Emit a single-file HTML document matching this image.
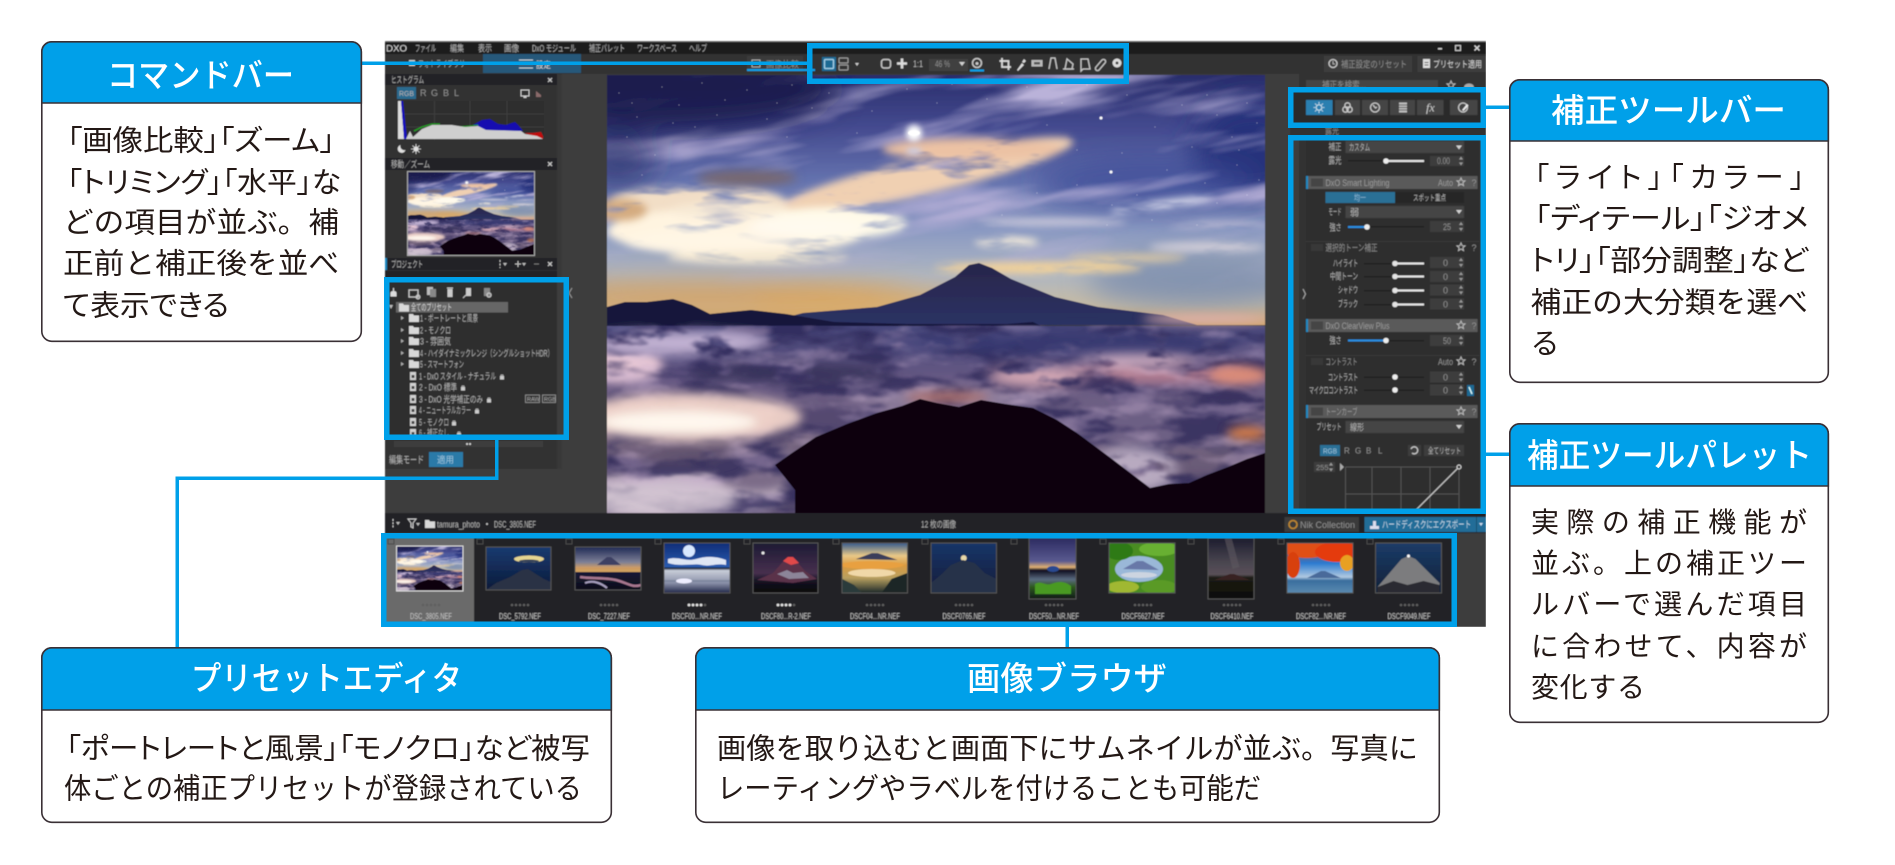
<!DOCTYPE html>
<html lang="ja"><head><meta charset="utf-8"><title>DxO PhotoLab 画面説明</title>
<style>
html,body{margin:0;padding:0;background:#fff;width:1895px;height:865px;overflow:hidden}
svg{display:block;font-family:"Liberation Sans","Noto Sans CJK JP",sans-serif}
.b{font-size:29px;fill:#231815;font-feature-settings:"palt"}
.f{font-size:28px;fill:#231815}
.g{font-size:29px;fill:#231815}
.h{font-size:33px;fill:#fff;font-weight:500}
.s{font-size:9px;fill:#b4b4b4}
.w{font-size:9px;fill:#d8d8d8}
.d{font-size:9px;fill:#8f8f8f}
.n{font-size:8px;fill:#c4c4c4;text-anchor:middle}
.i{fill:none;stroke:#c8c8c8;stroke-width:1.3}
</style></head><body>
<svg width="1895" height="865" viewBox="0 0 1895 865" xmlns="http://www.w3.org/2000/svg">
<defs>
<filter id="soft" x="0" y="0" width="100%" height="100%"><feGaussianBlur stdDeviation=".45"/></filter>
<filter id="bl" filterUnits="userSpaceOnUse" x="-60" y="-60" width="780" height="560"><feGaussianBlur stdDeviation="14"/></filter>
<filter id="bs" filterUnits="userSpaceOnUse" x="-60" y="-60" width="780" height="560"><feGaussianBlur stdDeviation="5"/></filter>
<filter id="gl" x="-100%" y="-100%" width="300%" height="300%"><feGaussianBlur stdDeviation="3"/></filter>
<filter id="wisp" filterUnits="userSpaceOnUse" x="-120" y="-140" width="900" height="480" color-interpolation-filters="sRGB"><feTurbulence type="fractalNoise" baseFrequency=".005 .032" numOctaves="4" seed="12"/><feColorMatrix values="0 0 0 0 .73 0 0 0 0 .70 0 0 0 0 .85 3 0 0 0 -1.42"/><feGaussianBlur stdDeviation="1"/></filter>
<filter id="tex" filterUnits="userSpaceOnUse" x="-40" y="-40" width="740" height="520" color-interpolation-filters="sRGB"><feGaussianBlur in="SourceGraphic" stdDeviation="4" result="a"/><feTurbulence type="fractalNoise" baseFrequency=".012 .05" numOctaves="4" seed="7"/><feColorMatrix values="0 0 0 0 0 0 0 0 0 0 0 0 0 0 0 4 0 0 0 -.9" result="n"/><feComposite in="a" in2="n" operator="in"/><feGaussianBlur stdDeviation=".6"/></filter>
<filter id="nd" filterUnits="userSpaceOnUse" x="0" y="250" width="658" height="188" color-interpolation-filters="sRGB"><feTurbulence type="fractalNoise" baseFrequency=".014 .05" numOctaves="5" seed="5"/><feColorMatrix values="0 0 0 0 .17 0 0 0 0 .15 0 0 0 0 .34 5 0 0 0 -2.1"/><feGaussianBlur stdDeviation="1.2"/></filter>
<filter id="nl" filterUnits="userSpaceOnUse" x="0" y="250" width="658" height="188" color-interpolation-filters="sRGB"><feTurbulence type="fractalNoise" baseFrequency=".018 .055" numOctaves="5" seed="17"/><feColorMatrix values="0 0 0 0 .80 0 0 0 0 .70 0 0 0 0 .82 5 0 0 0 -2.5"/><feGaussianBlur stdDeviation="1.2"/></filter>
<filter id="sea2" filterUnits="userSpaceOnUse" x="-40" y="200" width="740" height="280" color-interpolation-filters="sRGB"><feGaussianBlur in="SourceGraphic" stdDeviation="6" result="a"/><feTurbulence type="fractalNoise" baseFrequency=".024 .06" numOctaves="4" seed="33"/><feColorMatrix values="0 0 0 0 0 0 0 0 0 0 0 0 0 0 0 5 0 0 0 -1.5" result="n"/><feComposite in="a" in2="n" operator="in"/><feGaussianBlur stdDeviation="1"/></filter>
<linearGradient id="fade" x1="0" y1="0" x2="0" y2="1"><stop offset="0" stop-color="#fff"/><stop offset=".55" stop-color="#fff"/><stop offset="1" stop-color="#000"/></linearGradient>
<mask id="skym" maskUnits="userSpaceOnUse" x="0" y="0" width="658" height="438"><rect width="658" height="220" fill="url(#fade)"/></mask>
<linearGradient id="sky" x1="0" y1="0" x2="0" y2="1"><stop offset="0" stop-color="#2a2e6c"/><stop offset=".2" stop-color="#43498e"/><stop offset=".42" stop-color="#6472ae"/><stop offset=".62" stop-color="#8a99c2"/><stop offset=".8" stop-color="#aeb6c2"/><stop offset=".92" stop-color="#c8bca4"/><stop offset="1" stop-color="#d4a564"/></linearGradient>
<linearGradient id="cld" x1="0" y1="0" x2="0" y2="1"><stop offset="0" stop-color="#46467a"/><stop offset=".3" stop-color="#685a84"/><stop offset=".6" stop-color="#76667f"/><stop offset="1" stop-color="#54486a"/></linearGradient>
<linearGradient id="fj" x1="0" y1="0" x2="0" y2="1"><stop offset="0" stop-color="#28264a"/><stop offset="1" stop-color="#2c3264"/></linearGradient>
<linearGradient id="t2" x1="0" y1="0" x2="0" y2="1"><stop offset="0" stop-color="#163a70"/><stop offset="1" stop-color="#0e1b3a"/></linearGradient>
<linearGradient id="t3" x1="0" y1="0" x2="0" y2="1"><stop offset="0" stop-color="#1f2a55"/><stop offset=".35" stop-color="#7c7f96"/><stop offset=".5" stop-color="#d8a060"/><stop offset=".55" stop-color="#191a38"/><stop offset="1" stop-color="#0d0d1a"/></linearGradient>
<linearGradient id="t4" x1="0" y1="0" x2="0" y2="1"><stop offset="0" stop-color="#0f2d78"/><stop offset=".48" stop-color="#2a5cb0"/><stop offset=".5" stop-color="#101830"/><stop offset=".55" stop-color="#c8cdd8"/><stop offset=".8" stop-color="#8a90a8"/><stop offset="1" stop-color="#22284a"/></linearGradient>
<linearGradient id="t5" x1="0" y1="0" x2="0" y2="1"><stop offset="0" stop-color="#1d1a34"/><stop offset=".6" stop-color="#47304e"/><stop offset=".75" stop-color="#161424"/><stop offset="1" stop-color="#050508"/></linearGradient>
<linearGradient id="t6" x1="0" y1="0" x2="0" y2="1"><stop offset="0" stop-color="#3a5c8c"/><stop offset=".25" stop-color="#e8c888"/><stop offset=".45" stop-color="#d99a40"/><stop offset=".7" stop-color="#b8a060"/><stop offset="1" stop-color="#1e2a2a"/></linearGradient>
<linearGradient id="t7" x1="0" y1="0" x2="0" y2="1"><stop offset="0" stop-color="#1a3568"/><stop offset="1" stop-color="#0f1c3a"/></linearGradient>
<linearGradient id="t8" x1="0" y1="0" x2="0" y2="1"><stop offset="0" stop-color="#2c2a60"/><stop offset=".38" stop-color="#5a5a90"/><stop offset=".48" stop-color="#e0b070"/><stop offset=".53" stop-color="#101020"/><stop offset=".68" stop-color="#5a6a80"/><stop offset=".8" stop-color="#2e5a20"/><stop offset="1" stop-color="#101a18"/></linearGradient>
<linearGradient id="t10" x1="0" y1="0" x2="0" y2="1"><stop offset="0" stop-color="#1c1c2e"/><stop offset=".4" stop-color="#4a4650"/><stop offset=".6" stop-color="#5a5058"/><stop offset=".65" stop-color="#1c1c14"/><stop offset="1" stop-color="#0c0c08"/></linearGradient>
<linearGradient id="t11" x1="0" y1="0" x2="0" y2="1"><stop offset="0" stop-color="#d04418"/><stop offset=".4" stop-color="#2a7ad0"/><stop offset=".68" stop-color="#b0c8e0"/><stop offset=".75" stop-color="#3a6e9e"/><stop offset="1" stop-color="#5a8ab0"/></linearGradient>
<linearGradient id="t12" x1="0" y1="0" x2="0" y2="1"><stop offset="0" stop-color="#1c3c68"/><stop offset="1" stop-color="#0f2038"/></linearGradient>
<symbol id="fuji" viewBox="0 0 658 438" preserveAspectRatio="none">
<rect width="658" height="250" fill="url(#sky)"/>
<g filter="url(#bl)">
<ellipse cx="645" cy="75" rx="60" ry="50" fill="#28327a"/>
<ellipse cx="100" cy="222" rx="210" ry="16" fill="#d89a50" opacity=".75"/>
<ellipse cx="250" cy="228" rx="110" ry="9" fill="#e8a040" opacity=".85"/>
<ellipse cx="590" cy="205" rx="110" ry="28" fill="#8090ae" opacity=".9"/>
<ellipse cx="540" cy="108" rx="110" ry="26" fill="#3c4a96" opacity=".7"/>
</g>
<g mask="url(#skym)"><g transform="rotate(-11 330 110)"><rect x="-120" y="-140" width="900" height="480" filter="url(#wisp)"/></g></g>
<g filter="url(#bl)">
<ellipse cx="50" cy="14" rx="180" ry="42" fill="#151948" opacity=".85"/>
<ellipse cx="10" cy="85" rx="40" ry="30" fill="#262c68" opacity=".6"/>
</g>
<g filter="url(#tex)">
<ellipse cx="320" cy="100" rx="150" ry="18" fill="#f0d0b2" transform="rotate(-13 320 100)"/>
<ellipse cx="365" cy="74" rx="90" ry="11" fill="#ecc2a4"/>
<ellipse cx="90" cy="128" rx="90" ry="18" fill="#f2dec6"/>
<ellipse cx="130" cy="156" rx="130" ry="24" fill="#fff4e0"/>
<ellipse cx="225" cy="148" rx="75" ry="16" fill="#fffae8"/>
<ellipse cx="14" cy="135" rx="26" ry="11" fill="#d4ab80"/>
<ellipse cx="150" cy="182" rx="90" ry="7" fill="#f4e8d2"/>
<ellipse cx="400" cy="167" rx="32" ry="5" fill="#f8eedc"/>
<ellipse cx="445" cy="147" rx="75" ry="3.500" fill="#d4d0de"/>
<ellipse cx="555" cy="130" rx="52" ry="4.500" fill="#e0e0ee" transform="rotate(-8 555 130)"/>
<ellipse cx="600" cy="172" rx="58" ry="5" fill="#d2ced8"/>
<ellipse cx="610" cy="150" rx="52" ry="4" fill="#b4b4d0"/>
<ellipse cx="430" cy="193" rx="105" ry="6" fill="#f2d29a"/>
<ellipse cx="520" cy="183" rx="60" ry="4" fill="#dcc8a4"/>
</g>
<g filter="url(#bs)">
<ellipse cx="140" cy="103" rx="50" ry="7" fill="#7c6664" opacity=".9"/>
<ellipse cx="105" cy="165" rx="85" ry="10" fill="#fff6e6" opacity=".9"/>
<ellipse cx="200" cy="152" rx="60" ry="8" fill="#fffaf0" opacity=".95"/>
<ellipse cx="120" cy="135" rx="55" ry="8" fill="#f6e8d4" opacity=".8"/>
</g>
<path d="M12 18h0M30 42h0M55 12h0M72 30h0M95 8h0M118 25h0M140 15h0M160 44h0M20 62h0M48 80h0M88 52h0M185 10h0M205 33h0M232 6h0M265 36h0M300 14h0M345 9h0M380 24h0M420 12h0M455 28h0M480 10h0M520 20h0M548 52h0M585 72h0M610 40h0M640 28h0M630 90h0M598 108h0M560 95h0M530 120h0M470 110h0M640 120h0M590 150h0M500 150h0M430 118h0M395 140h0M250 58h0M180 62h0M35 100h0M625 62h0M650 48h0M470 75h0M515 78h0M25 28h0M66 48h0M110 40h0M170 28h0M222 18h0M330 28h0M440 50h0M575 30h0M600 20h0M632 75h0M505 130h0M545 145h0M610 128h0M652 105h0" stroke="#fff" stroke-width=".9" stroke-linecap="round" opacity=".6"/>
<circle cx="307" cy="58" r="8" fill="#fff" filter="url(#gl)"/><ellipse cx="307" cy="58" rx="6" ry="3" fill="#fff"/>
<ellipse cx="307" cy="76" rx="8" ry="3" fill="#c8cce8" filter="url(#gl)"/>
<circle cx="494" cy="43" r="1.500" fill="#fff"/><circle cx="504" cy="97" r="1.500" fill="#fff"/>
<polygon points="372,188 385,193 404,204 448,222 491,232 556,240 590,250 150,250 196,238 270,232 313,220 348,202 362,190" fill="url(#fj)"/>
<polygon points="0,232 18,227 40,227 66,224 85,230 103,239 144,235 179,239 227,247 300,249 400,249 426,247 440,254 0,258" fill="#15173a"/>
<rect y="251" width="658" height="187" fill="url(#cld)"/>
<g filter="url(#bs)">
<ellipse cx="14" cy="290" rx="42" ry="18" fill="#e6c6d4"/>
<ellipse cx="560" cy="298" rx="100" ry="11" fill="#bc8090" opacity=".85"/>
<ellipse cx="350" cy="322" rx="110" ry="14" fill="#9c8aa6" opacity=".7"/>
<ellipse cx="540" cy="350" rx="120" ry="24" fill="#6a5e86" opacity=".8"/>
<ellipse cx="70" cy="420" rx="110" ry="24" fill="#c4b4c6"/>
<ellipse cx="150" cy="392" rx="45" ry="26" fill="#7c6c88"/>
</g>
<rect y="250" width="658" height="188" filter="url(#nd)" opacity=".75"/>
<rect y="250" width="658" height="188" filter="url(#nl)" opacity=".38"/>
<g filter="url(#sea2)">
<ellipse cx="460" cy="268" rx="190" ry="11" fill="#363870"/>
<ellipse cx="185" cy="298" rx="105" ry="11" fill="#39345c"/>
<ellipse cx="225" cy="345" rx="55" ry="16" fill="#544870"/>
<ellipse cx="70" cy="378" rx="55" ry="9" fill="#63546f"/>
<ellipse cx="70" cy="268" rx="90" ry="12" fill="#c4b4d4"/>
<ellipse cx="430" cy="302" rx="50" ry="11" fill="#d4a8b4"/>
<ellipse cx="530" cy="286" rx="60" ry="7" fill="#dcb8c8"/>
<ellipse cx="525" cy="395" rx="45" ry="24" fill="#b8aac0"/>
</g>
<g filter="url(#bs)">
<ellipse cx="632" cy="300" rx="30" ry="9" fill="#dc8c78"/>
<ellipse cx="600" cy="244" rx="65" ry="5" fill="#e0b0ac"/>
<ellipse cx="80" cy="342" rx="115" ry="24" fill="#f6d8cc" opacity=".92"/>
<ellipse cx="72" cy="347" rx="78" ry="11" fill="#fff8ee"/>
<ellipse cx="640" cy="358" rx="20" ry="6" fill="#d87a40"/>
<ellipse cx="340" cy="322" rx="42" ry="5" fill="#b07068"/>
<ellipse cx="55" cy="425" rx="75" ry="16" fill="#d4c6d2" opacity=".85"/>
</g>
<polygon points="168,390 185,378 209,362 240,349 270,338 295,331 313,324 330,328 352,332 374,325 398,329 426,333 450,345 470,358 505,384 543,413 562,409 582,408 600,400 621,392 640,384 658,378 658,438 188,438 188,415" fill="#070510"/>
</symbol>
<g id="sp"><polygon points="0,3 2,0 4,3" fill="#999"/><polygon points="0,6 2,9 4,6" fill="#999"/></g>
<polygon id="st" points="0,-4 1.2,-1.3 4,-1.2 1.9,.7 2.5,3.6 0,2 -2.5,3.6 -1.9,.7 -4,-1.2 -1.2,-1.3" fill="none" stroke="#b8b8b8" stroke-width="1"/>
<polygon id="ar" points="0,0 6,0 3,4" fill="#d0d0d0"/>
<g id="fo"><path d="M0 1h4l1 1.500h5v6.500h-10z" fill="#d8d8d8"/></g>
<g id="fi"><rect width="6" height="8" fill="#d0d0d0"/><rect x="1.500" y="3" width="3" height="3" fill="#444"/></g>
<g id="lk"><rect x="0" y="2" width="4" height="3.500" fill="#ccc"/><path d="M1 2v-1h2v1" fill="none" stroke="#ccc" stroke-width=".7"/></g>
<g id="stars"><path d="M-8 0h.01M-4 0h.01M0 0h.01M4 0h.01M8 0h.01" stroke="#5e5e5e" stroke-width="2.600" stroke-linecap="round"/></g>
<g id="star4"><path d="M-8 0h.01M-4 0h.01M0 0h.01M4 0h.01" stroke="#e8e8e8" stroke-width="2.800" stroke-linecap="round"/><path d="M8 0h.01" stroke="#5e5e5e" stroke-width="2.600" stroke-linecap="round"/></g>
</defs>

<rect width="1895" height="865" fill="#fff"/>
<g filter="url(#soft)">
<rect x="385" y="41" width="1101" height="586" fill="#3a3a3a"/>
<rect x="385" y="41" width="1101" height="1" fill="#777"/>
<rect x="385" y="42" width="1101" height="12" fill="#1b1b1d"/>
<rect x="385" y="54" width="1101" height="20" fill="#333"/>
<text x="386" y="51.500" class="w" textLength="21" lengthAdjust="spacingAndGlyphs">DXO</text>
<text x="415" y="51.500" class="s" textLength="21" lengthAdjust="spacingAndGlyphs">ファイル</text>
<text x="450" y="51.500" class="s" textLength="14" lengthAdjust="spacingAndGlyphs">編集</text>
<text x="478" y="51.500" class="s" textLength="14" lengthAdjust="spacingAndGlyphs">表示</text>
<text x="504" y="51.500" class="s" textLength="15" lengthAdjust="spacingAndGlyphs">画像</text>
<text x="532" y="51.500" class="s" textLength="44" lengthAdjust="spacingAndGlyphs">DxO モジュール</text>
<text x="589" y="51.500" class="s" textLength="36" lengthAdjust="spacingAndGlyphs">補正パレット</text>
<text x="637" y="51.500" class="s" textLength="40" lengthAdjust="spacingAndGlyphs">ワークスペース</text>
<text x="689" y="51.500" class="s" textLength="18" lengthAdjust="spacingAndGlyphs">ヘルプ</text>
<rect x="1438" y="48" width="4" height="1.500" fill="#ccc"/>
<rect x="1455.500" y="45.500" width="5" height="5" fill="none" stroke="#ccc"/>
<path d="M1474.500 45.500l5 5M1479.500 45.500l-5 5" stroke="#ddd" stroke-width="1.300"/>

<rect x="483" y="54" width="98" height="19" fill="#25597a"/>
<rect x="409" y="60" width="6" height="6" fill="#c8c8c8"/>
<text x="418" y="67" class="s" textLength="47" lengthAdjust="spacingAndGlyphs">フォトライブラリ</text>
<path d="M519 60h14M519 64h14M519 68h14" stroke="#c8d4dc"/>
<text x="536" y="68" class="w" textLength="15" lengthAdjust="spacingAndGlyphs">設定</text>
<rect x="747" y="56" width="56" height="16" fill="#3a3a3a"/>
<rect x="752" y="60" width="8" height="7" fill="none" stroke="#aaa"/>
<text x="766" y="67.500" class="d" textLength="33" lengthAdjust="spacingAndGlyphs">画像比較</text>
<rect x="747" y="69" width="68" height="2" fill="#00a0e9"/>

<!-- left panel -->
<rect x="385" y="74" width="172" height="395" fill="#333"/>
<rect x="557" y="74" width="50" height="439" fill="#3d3d3d"/>
<rect x="557" y="74" width="5" height="395" fill="#383838"/>
<rect x="385" y="74" width="172" height="11" fill="#242426"/>
<text x="391" y="83" class="s" textLength="33" lengthAdjust="spacingAndGlyphs">ヒストグラム</text>
<path d="M548 78l4 4M552 78l-4 4" stroke="#ccc" stroke-width="1.200"/>
<rect x="397" y="87" width="19" height="12" fill="#2b6a8f"/>
<text x="399" y="96" class="s" style="font-size:7.500px" textLength="15" lengthAdjust="spacingAndGlyphs">RGB</text>
<text x="420" y="96" class="d">R</text><text x="431" y="96" class="d">G</text><text x="443" y="96" class="d">B</text><text x="454" y="96" class="d">L</text>
<rect x="521" y="90" width="8" height="6" fill="none" stroke="#ccc"/><rect x="523.500" y="96" width="3" height="2" fill="#ccc"/>
<path d="M536 91l5 4v2h-5z" fill="#8a6a6a"/>
<rect x="398" y="101" width="146" height="39" fill="#2e2e2e"/>
<path d="M434.500 101v39M470 101v39M507 101v39M398 114h146M398 127h146" stroke="#3e3e3e"/>
<polygon points="398,101 401,101 404,139 398,139" fill="#ddd"/>
<polygon points="401,101 403,101 407,139 404,139" fill="#1410c0"/>
<polygon points="473,125 482,120 490,119 498,124 506,125 515,122 519,126 523,131 500,131 486,130" fill="#1410b0"/>
<polygon points="524,133 532,133 541,132 543,136 543,139 535,136" fill="#c01010"/>
<polyline points="414,131 422,127 432,124 440,124" fill="none" stroke="#20a020" stroke-width="1.300"/>
<polyline points="458,127 470,126 478,125" fill="none" stroke="#20a020" stroke-width="1"/>
<polygon points="406,139 410,131 413,137 422,129 432,125 452,125 465,127 478,126 486,130 521,131 525,134 537,136 543,139" fill="#cfcfcf"/>
<path d="M400.500 145a4 4 0 1 0 5 5a4 4 0 0 1-5-5z" fill="#e0e0e0"/>
<circle cx="416" cy="149" r="2.500" fill="#e0e0e0"/><path d="M416 144v10M411 149h10M412.500 145.500l7 7M419.500 145.500l-7 7" stroke="#e0e0e0" stroke-width=".8"/>
<rect x="385" y="158" width="172" height="12" fill="#242426"/>
<text x="391" y="167.500" class="s" textLength="39" lengthAdjust="spacingAndGlyphs">移動／ズーム</text>
<path d="M548 162l4 4M552 162l-4 4" stroke="#ccc" stroke-width="1.200"/>
<use href="#fuji" x="407.500" y="171.500" width="127" height="84"/>
<rect x="407.500" y="171.500" width="127" height="84" fill="none" stroke="#aaa"/>
<rect x="385" y="258" width="172" height="12" fill="#242426"/><rect x="385" y="258" width="2" height="12" fill="#1f88c0"/>
<text x="391" y="267.500" class="s" textLength="32" lengthAdjust="spacingAndGlyphs">プロジェクト</text>
<path d="M500 260v8" stroke="#bbb" stroke-dasharray="2 1.500"/><polygon points="503,263 507,263 505,266" fill="#bbb"/>
<path d="M515 264h6M518 261v6" stroke="#bbb"/><polygon points="522,263 526,263 524,266" fill="#bbb"/>
<path d="M534 264h5" stroke="#777"/><path d="M548 262l4 4M552 262l-4 4" stroke="#ccc" stroke-width="1.200"/>
<rect x="385" y="271" width="172" height="12" fill="#242426"/>
<rect x="390" y="282" width="167" height="153" fill="#2e2e2e"/>
<rect x="557" y="282" width="7" height="153" fill="#3d3d3d"/>
<!-- preset icons -->
<path d="M391 293c0-2 5-2 5 0v3h-5zM393.500 288v3" stroke="#ddd" fill="#ddd"/>
<rect x="409" y="290" width="9" height="7" class="i"/><circle cx="418" cy="297" r="1.800" class="i"/>
<rect x="427" y="287" width="6" height="8" fill="#bbb"/><rect x="430" y="289" width="6" height="8" fill="#888"/>
<rect x="447.500" y="289" width="5" height="8" fill="#ccc"/><rect x="447" y="287.500" width="6" height="1" fill="#ccc"/>
<rect x="466" y="288" width="5" height="8" fill="#ccc"/><path d="M463 298l3-3" stroke="#ccc"/>
<rect x="484" y="288" width="6" height="8" fill="#888"/><circle cx="489" cy="295" r="2" class="i"/>
<polygon points="389,305 393,305 391,309" fill="#bbb"/>
<rect x="396" y="302" width="112" height="10.500" fill="#666"/>
<use href="#fo" x="399" y="302.500"/>
<text x="411" y="310.500" class="w" textLength="41" lengthAdjust="spacingAndGlyphs">全てのプリセット</text>
<g fill="#aaa"><polygon points="401,316 404,318 401,320"/><polygon points="401,328 404,330 401,332"/><polygon points="401,339 404,341 401,343"/><polygon points="401,351 404,353 401,355"/><polygon points="401,362 404,364 401,366"/></g>
<use href="#fo" x="409" y="313"/><use href="#fo" x="409" y="325"/><use href="#fo" x="409" y="336"/><use href="#fo" x="409" y="348"/><use href="#fo" x="409" y="359"/>
<text x="420" y="321.500" class="s" textLength="58" lengthAdjust="spacingAndGlyphs">1 - ポートレートと風景</text>
<text x="420" y="333.500" class="s" textLength="31" lengthAdjust="spacingAndGlyphs">2 - モノクロ</text>
<text x="420" y="344.500" class="s" textLength="31" lengthAdjust="spacingAndGlyphs">3 - 雰囲気</text>
<text x="420" y="356.500" class="s" textLength="133" lengthAdjust="spacingAndGlyphs">4 - ハイダイナミックレンジ（シングルショットHDR）</text>
<text x="420" y="367.500" class="s" textLength="44" lengthAdjust="spacingAndGlyphs">5 - スマートフォン</text>
<use href="#fi" x="410" y="372"/><use href="#fi" x="410" y="383"/><use href="#fi" x="410" y="395"/><use href="#fi" x="410" y="406"/><use href="#fi" x="410" y="418"/><use href="#fi" x="410" y="429"/>
<text x="419" y="379.500" class="s" textLength="77" lengthAdjust="spacingAndGlyphs">1 - DxO スタイル - ナチュラル</text><use href="#lk" x="500" y="374"/>
<text x="419" y="390.500" class="s" textLength="38" lengthAdjust="spacingAndGlyphs">2 - DxO 標準</text><use href="#lk" x="461" y="385"/>
<text x="419" y="402.500" class="s" textLength="64" lengthAdjust="spacingAndGlyphs">3 - DxO 光学補正のみ</text><use href="#lk" x="487" y="397"/>
<rect x="525.500" y="395" width="14" height="7.500" fill="none" stroke="#999" stroke-width=".8"/><text x="527" y="401" fill="#aaa" style="font-size:5.500px">RAW</text>
<rect x="542.500" y="395" width="13" height="7.500" fill="none" stroke="#999" stroke-width=".8"/><text x="544" y="401" fill="#aaa" style="font-size:5.500px">RGB</text>
<text x="419" y="413.500" class="s" textLength="52" lengthAdjust="spacingAndGlyphs">4 - ニュートラルカラー</text><use href="#lk" x="475" y="408"/>
<text x="419" y="425.500" class="s" textLength="30" lengthAdjust="spacingAndGlyphs">5 - モノクロ</text><use href="#lk" x="452" y="420"/>
<text x="419" y="436" class="s" textLength="30" lengthAdjust="spacingAndGlyphs">6 - 補正なし</text><use href="#lk" x="457" y="431"/>
<rect x="394" y="441" width="149" height="6" fill="#3e3e3e"/>
<path d="M467 444h.1M470 444h.1" stroke="#ddd" stroke-width="2" stroke-linecap="round"/>
<text x="389" y="463.500" class="s" style="font-size:10px" textLength="35" lengthAdjust="spacingAndGlyphs">編集モード</text>
<rect x="429" y="452" width="34" height="15" fill="#2a7aa8"/>
<text x="437" y="463" fill="#9ac4dc" style="font-size:9px" textLength="17" lengthAdjust="spacingAndGlyphs">適用</text>
<rect x="385" y="469" width="172" height="44" fill="#3c3c3c"/>
<path d="M572 288l-3 5 3 5" fill="none" stroke="#999"/>

<!-- photo -->
<use href="#fuji" x="607" y="75" width="658" height="438"/>

<!-- toolbar -->
<rect x="822" y="57" width="14" height="14" fill="#1f6b94"/>
<rect x="824.500" y="59.500" width="9" height="9" rx="1" fill="none" stroke="#a8d4ec" stroke-width="1.300"/>
<rect x="839" y="58" width="9" height="5" rx="1" class="i" style="stroke:#999"/><rect x="839" y="65" width="9" height="5" rx="1" class="i" style="stroke:#999"/>
<polygon points="855,63 859,63 857,66" fill="#ccc"/>
<rect x="881.500" y="59.500" width="9" height="8.500" rx="2.500" class="i" style="stroke-width:1.500"/>
<path d="M902 58.500v10M897 63.500h10" stroke="#ddd" stroke-width="2.600"/>
<text x="913" y="67" class="s" textLength="10" lengthAdjust="spacingAndGlyphs">1:1</text>
<rect x="929" y="59" width="39" height="12" fill="#3f3f3f"/>
<text x="935" y="67" class="d" textLength="15" lengthAdjust="spacingAndGlyphs">46 %</text>
<use href="#ar" x="959" y="62"/>
<circle cx="977" cy="63" r="4.500" class="i" style="stroke-width:1.500"/><circle cx="977" cy="63.500" r="1.500" fill="#ccc"/>
<rect x="970" y="69.500" width="14" height="2" fill="#00a0e9"/>
<path d="M1002 58v9h9M999.500 61h9v9" fill="none" stroke="#ddd" stroke-width="1.700"/>
<path d="M1017 70l5-7 2 2-6 6zM1022 62l2-3 2 2-2 2z" fill="#ddd"/>
<rect x="1031.500" y="60" width="11" height="6.500" fill="#bbb"/><rect x="1034" y="62" width="6" height="2.500" fill="#555"/>
<path d="M1049 69l2-11h4l2 11" class="i"/>
<path d="M1065 69l2-10 6 5-1 5z" class="i"/><path d="M1063 69h11" class="i"/>
<path d="M1081 59h7l2 10h-7l-2 2z" class="i"/>
<path d="M1096 67l6-7a2 2 0 0 1 3 3l-6 7a2 2 0 0 1-3-3z" class="i"/>
<circle cx="1117" cy="63" r="4.500" fill="#ddd"/><circle cx="1117" cy="63" r="1.500" fill="#444"/>

<!-- right header buttons -->
<rect x="1324" y="56" width="88" height="16" fill="#3c3c3c"/>
<circle cx="1333" cy="63.500" r="4" class="i"/><path d="M1333 61v3h2" class="i" style="stroke-width:.8"/>
<text x="1341" y="67.500" class="d" textLength="66" lengthAdjust="spacingAndGlyphs">補正設定のリセット</text>
<rect x="1417.500" y="56" width="68.500" height="16" fill="#3c3c3c"/>
<rect x="1423" y="59" width="7" height="9" fill="#ddd"/><rect x="1424.500" y="62" width="4" height="1" fill="#555"/><rect x="1424.500" y="64.500" width="4" height="1" fill="#555"/>
<text x="1433" y="67.500" class="w" textLength="49" lengthAdjust="spacingAndGlyphs">プリセット適用</text>

<!-- right panel -->
<rect x="1265" y="74" width="221" height="439" fill="#3d3d3d"/>
<rect x="1299" y="74" width="187" height="439" fill="#333"/>
<rect x="1306" y="80" width="132" height="8" fill="#444"/>
<text x="1322" y="88" class="d" textLength="44" lengthAdjust="spacingAndGlyphs">補正を検索...</text>
<use href="#st" x="1451" y="85"/><ellipse cx="1469" cy="87" rx="5" ry="3.500" fill="#aaa"/>
<rect x="1290" y="89" width="196" height="39" fill="#2b2b2b"/>
<rect x="1290" y="128" width="196" height="8" fill="#333"/>
<text x="1325" y="134" class="d" textLength="14" lengthAdjust="spacingAndGlyphs">露光</text>
<rect x="1306" y="100" width="26.500" height="15" fill="#2a7fb0"/>
<rect x="1335" y="100" width="25" height="15" fill="#444"/>
<rect x="1362" y="100" width="26" height="15" fill="#444"/>
<rect x="1390" y="100" width="25" height="15" fill="#444"/>
<rect x="1417" y="100" width="26.500" height="15" fill="#444"/>
<rect x="1450" y="100" width="27.500" height="15" fill="#444"/>
<circle cx="1319" cy="107.500" r="2.800" fill="none" stroke="#cfe4f0"/><path d="M1319 102v2M1319 111v2M1313.500 107.500h2M1322.500 107.500h2M1315 103.500l1.500 1.500M1323 103.500l-1.500 1.500M1315 111.500l1.500-1.500M1323 111.500l-1.500-1.500" stroke="#cfe4f0" stroke-width=".8"/>
<circle cx="1347.500" cy="105.500" r="2.700" class="i"/><circle cx="1345.500" cy="109.500" r="2.700" class="i"/><circle cx="1349.500" cy="109.500" r="2.700" class="i"/>
<circle cx="1375" cy="107.500" r="4.500" class="i"/><path d="M1373 105l2.500 3 1.500-1" class="i"/>
<rect x="1399" y="102.500" width="8" height="10" fill="#bbb"/><path d="M1399 105h8M1399 107.500h8M1399 110h8" stroke="#444" stroke-width=".7"/>
<text x="1426" y="111.500" fill="#ccc" style="font-family:'Liberation Serif',serif;font-style:italic;font-size:12px">fx</text>
<circle cx="1463" cy="107.500" r="4.500" class="i"/><path d="M1462 110l5-6 1.500 1.500-5 5.500z" fill="#eee"/>

<rect x="1306" y="136" width="173" height="378" fill="#2e2e2e"/>
<text x="1341.500" y="150" class="s" text-anchor="end" textLength="13" lengthAdjust="spacingAndGlyphs">補正</text>
<rect x="1345.500" y="141" width="118.500" height="12" fill="#444"/>
<text x="1349" y="150.500" class="s" textLength="21" lengthAdjust="spacingAndGlyphs">カスタム</text><use href="#ar" x="1456" y="145.500"/>
<text x="1341.500" y="163.500" class="s" text-anchor="end" textLength="13" lengthAdjust="spacingAndGlyphs">露光</text>
<rect x="1348" y="160" width="38" height="1.500" fill="#222"/><rect x="1386" y="160" width="38" height="2" fill="#e4e4e4"/>
<circle cx="1386" cy="161" r="2.800" fill="#eee"/>
<rect x="1430" y="156" width="34" height="10" fill="#3c3c3c"/>
<text x="1437" y="164" class="d" textLength="13" lengthAdjust="spacingAndGlyphs">0.00</text><use href="#sp" x="1459" y="156.500"/>

<!-- Smart Lighting -->
<rect x="1306" y="176" width="171.500" height="13" fill="#5a5a5a"/><rect x="1306" y="176" width="2" height="13" fill="#1f88c0"/>
<rect x="1311" y="178.500" width="12" height="8" fill="#444"/>
<text x="1325.500" y="186" fill="#999" style="font-size:9px" textLength="64" lengthAdjust="spacingAndGlyphs">DxO Smart Lighting</text>
<text x="1438" y="186" fill="#999" style="font-size:9px" textLength="15" lengthAdjust="spacingAndGlyphs">Auto</text>
<use href="#st" x="1461" y="182"/><text x="1471.500" y="186" class="d">?</text>
<rect x="1325.500" y="192" width="69.500" height="11" fill="#2a6f96"/><rect x="1395" y="192" width="69" height="11" fill="#282828"/>
<text x="1354" y="200.500" fill="#8cb8d4" style="font-size:8px" textLength="12" lengthAdjust="spacingAndGlyphs">均一</text>
<text x="1413" y="200.500" class="s" style="font-size:8px" textLength="33" lengthAdjust="spacingAndGlyphs">スポット重点</text>
<text x="1341.500" y="215" class="s" text-anchor="end" textLength="13" lengthAdjust="spacingAndGlyphs">モード</text>
<rect x="1345.500" y="206" width="118.500" height="12" fill="#444"/>
<text x="1350" y="215.500" class="s">弱</text><use href="#ar" x="1456" y="210"/>
<text x="1341.500" y="230.500" class="s" text-anchor="end" textLength="12" lengthAdjust="spacingAndGlyphs">強さ</text>
<rect x="1348" y="226" width="19" height="2" fill="#2a8de0"/><rect x="1367" y="226" width="57" height="1.500" fill="#222"/><circle cx="1367" cy="227" r="2.800" fill="#eee"/>
<rect x="1430" y="221" width="34" height="11" fill="#3c3c3c"/><text x="1443" y="230" class="d" textLength="8" lengthAdjust="spacingAndGlyphs">25</text><use href="#sp" x="1459" y="222"/>

<!-- selective tone -->
<rect x="1306" y="241" width="173" height="1" fill="#3a3a3a"/>
<rect x="1311" y="244" width="12" height="7" fill="#383838"/>
<text x="1325.500" y="251" class="d" textLength="52" lengthAdjust="spacingAndGlyphs">選択的トーン補正</text>
<use href="#st" x="1461" y="247"/><text x="1471.500" y="251" class="d">?</text>
<text x="1358" y="266.500" class="s" text-anchor="end" textLength="25" lengthAdjust="spacingAndGlyphs">ハイライト</text>
<text x="1358" y="279.500" class="s" text-anchor="end" textLength="28" lengthAdjust="spacingAndGlyphs">中間トーン</text>
<text x="1358" y="293" class="s" text-anchor="end" textLength="20" lengthAdjust="spacingAndGlyphs">シャドウ</text>
<text x="1358" y="307" class="s" text-anchor="end" textLength="20" lengthAdjust="spacingAndGlyphs">ブラック</text>
<g fill="#222"><rect x="1364" y="263" width="31" height="1.500"/><rect x="1364" y="276" width="31" height="1.500"/><rect x="1364" y="290" width="31" height="1.500"/><rect x="1364" y="304" width="31" height="1.500"/></g>
<g fill="#e4e4e4"><rect x="1395" y="262.500" width="29" height="2"/><rect x="1395" y="275.500" width="29" height="2"/><rect x="1395" y="289.500" width="29" height="2"/><rect x="1395" y="303.500" width="29" height="2"/><circle cx="1395" cy="263.500" r="2.800"/><circle cx="1395" cy="276.500" r="2.800"/><circle cx="1395" cy="290.500" r="2.800"/><circle cx="1395" cy="304.500" r="2.800"/></g>
<g fill="#3c3c3c"><rect x="1430" y="257" width="34" height="11"/><rect x="1430" y="271" width="34" height="11"/><rect x="1430" y="284.500" width="34" height="11"/><rect x="1430" y="298.500" width="34" height="11"/></g>
<text x="1443" y="266" class="d">0</text><text x="1443" y="280" class="d">0</text><text x="1443" y="293.500" class="d">0</text><text x="1443" y="307.500" class="d">0</text>
<use href="#sp" x="1459" y="258"/><use href="#sp" x="1459" y="272"/><use href="#sp" x="1459" y="285.500"/><use href="#sp" x="1459" y="299.500"/>
<path d="M1303 289l2.500 5-2.500 5" fill="none" stroke="#aaa"/>

<!-- ClearView -->
<rect x="1306" y="319" width="171.500" height="13" fill="#5a5a5a"/><rect x="1306" y="319" width="2" height="13" fill="#1f88c0"/>
<rect x="1311" y="321.500" width="12" height="8" fill="#444"/>
<text x="1325.500" y="329" fill="#999" style="font-size:9px" textLength="64" lengthAdjust="spacingAndGlyphs">DxO ClearView Plus</text>
<use href="#st" x="1461" y="325"/><text x="1471.500" y="329" class="d">?</text>
<text x="1341.500" y="343.500" class="s" text-anchor="end" textLength="12" lengthAdjust="spacingAndGlyphs">強さ</text>
<rect x="1348" y="339.500" width="38" height="2" fill="#2a8de0"/><rect x="1386" y="340" width="38" height="1.500" fill="#222"/><circle cx="1386" cy="340.500" r="2.800" fill="#eee"/>
<rect x="1430" y="335" width="34" height="11" fill="#3c3c3c"/><text x="1443" y="344" class="d" textLength="8" lengthAdjust="spacingAndGlyphs">50</text><use href="#sp" x="1459" y="336"/>

<!-- Contrast -->
<rect x="1306" y="355" width="173" height="1" fill="#3a3a3a"/>
<rect x="1311" y="358" width="12" height="7" fill="#383838"/>
<text x="1325.500" y="365" class="d" textLength="32" lengthAdjust="spacingAndGlyphs">コントラスト</text>
<text x="1438" y="365" class="d" textLength="15" lengthAdjust="spacingAndGlyphs">Auto</text><use href="#st" x="1461" y="361"/><text x="1471.500" y="365" class="d">?</text>
<text x="1358" y="380.500" class="s" text-anchor="end" textLength="30" lengthAdjust="spacingAndGlyphs">コントラスト</text>
<text x="1358" y="393.500" class="s" text-anchor="end" textLength="49" lengthAdjust="spacingAndGlyphs">マイクロコントラスト</text>
<rect x="1364" y="376.500" width="60" height="1.500" fill="#222"/><rect x="1364" y="389.500" width="60" height="1.500" fill="#222"/>
<circle cx="1395" cy="377" r="2.800" fill="#eee"/><circle cx="1395" cy="390" r="2.800" fill="#eee"/>
<rect x="1430" y="371.500" width="34" height="11" fill="#3c3c3c"/><rect x="1430" y="384.500" width="34" height="11" fill="#3c3c3c"/>
<text x="1443" y="380.500" class="d">0</text><text x="1443" y="393.500" class="d">0</text>
<use href="#sp" x="1459" y="372.500"/><use href="#sp" x="1459" y="385.500"/>
<rect x="1467" y="385" width="7" height="11" fill="#1f6b94"/><path d="M1469 387l3 7" stroke="#dff" stroke-width="1.400"/>

<!-- Tone curve -->
<rect x="1306" y="405" width="171.500" height="13" fill="#5a5a5a"/><rect x="1306" y="405" width="2" height="13" fill="#1f88c0"/>
<rect x="1311" y="407.500" width="12" height="8" fill="#444"/>
<text x="1325.500" y="415" fill="#999" style="font-size:9px" textLength="32" lengthAdjust="spacingAndGlyphs">トーンカーブ</text>
<use href="#st" x="1461" y="411"/><text x="1471.500" y="415" class="d">?</text>
<text x="1341.500" y="430" class="s" text-anchor="end" textLength="25" lengthAdjust="spacingAndGlyphs">プリセット</text>
<rect x="1345.500" y="421" width="118.500" height="12" fill="#444"/>
<text x="1350" y="430.500" class="s" textLength="14" lengthAdjust="spacingAndGlyphs">線形</text><use href="#ar" x="1456" y="425"/>
<rect x="1320" y="445" width="20" height="11" fill="#2a6f96"/>
<text x="1323" y="453.500" fill="#9ac4dc" style="font-size:7px" textLength="14" lengthAdjust="spacingAndGlyphs">RGB</text>
<text x="1344" y="453.500" class="d" style="font-size:8px">R</text><text x="1355" y="453.500" class="d" style="font-size:8px">G</text><text x="1366" y="453.500" class="d" style="font-size:8px">B</text><text x="1378" y="453.500" class="d" style="font-size:8px">L</text>
<rect x="1408" y="445" width="13" height="11" fill="#3c3c3c"/><path d="M1411 449a3.500 3.500 0 1 1 1 4" class="i"/>
<rect x="1424" y="445" width="40" height="11" fill="#3c3c3c"/>
<text x="1428" y="453.500" class="s" style="font-size:8px" textLength="33" lengthAdjust="spacingAndGlyphs">全てリセット</text>
<rect x="1314" y="462" width="21" height="10" fill="#3c3c3c"/><text x="1316" y="470" class="d" style="font-size:7.500px">255</text><use href="#sp" x="1329" y="462.500"/>
<polygon points="1340,463 1344,467 1340,471" fill="#aaa"/>
<path d="M1345.500 467H1459M1345.500 494H1459M1345.500 467V510M1372 467V510M1401 467V510M1430 467V510M1459 467V510" stroke="#555" fill="none"/>
<path d="M1459 467L1416 510" stroke="#ccc" stroke-width="1.200"/><circle cx="1459" cy="467" r="2" fill="#333" stroke="#ddd"/>

<!-- status strip -->
<rect x="385" y="513" width="1101" height="20" fill="#242426"/>
<path d="M393 519v9" stroke="#ccc" stroke-dasharray="2 1.200"/><polygon points="396,522 400,522 398,525" fill="#bbb"/>
<path d="M408 519h8l-3 4v5l-2-1v-4z" fill="none" stroke="#ccc"/><polygon points="416,523 420,523 418,526" fill="#bbb"/>
<use href="#fo" x="425" y="519"/>
<text x="437" y="527.500" class="s" textLength="43" lengthAdjust="spacingAndGlyphs">tamura_photo</text>
<circle cx="487" cy="524" r="1" fill="#ccc"/>
<text x="494" y="527.500" class="s" textLength="42" lengthAdjust="spacingAndGlyphs">DSC_3805.NEF</text>
<text x="921" y="527.500" class="s" textLength="35" lengthAdjust="spacingAndGlyphs">12 枚の画像</text>
<rect x="1284.500" y="517" width="74.500" height="15" fill="#3a3a3a"/>
<circle cx="1293" cy="524.500" r="4" fill="none" stroke="#c08830" stroke-width="1.600"/>
<text x="1300" y="528" class="d" style="font-size:9.500px" textLength="55" lengthAdjust="spacingAndGlyphs">Nik Collection</text>
<rect x="1364.500" y="517" width="121.500" height="15" fill="#246d98"/><rect x="1476" y="517" width="1" height="15" fill="#1b4f70"/>
<path d="M1370 529h9v-3h-9zM1373 526v-5h3v5" fill="#dde"/>
<text x="1382" y="528" fill="#c8dcea" style="font-size:9.500px" textLength="89" lengthAdjust="spacingAndGlyphs">ハードディスクにエクスポート</text>
<polygon points="1479,523 1483,523 1481,526" fill="#cde"/>

<!-- browser -->
<rect x="385" y="533" width="1101" height="94" fill="#3e3e3e"/>
<rect x="386" y="538" width="1066" height="84" fill="#232325"/>
<rect x="386" y="538" width="88" height="84" fill="#6a6a6a"/>
<g fill="none" stroke="#4a4a4a"><rect x="388" y="539" width="6" height="5"/><rect x="477" y="539" width="6" height="5"/><rect x="566" y="539" width="6" height="5"/><rect x="655" y="539" width="6" height="5"/><rect x="744" y="539" width="6" height="5"/><rect x="833" y="539" width="6" height="5"/><rect x="922" y="539" width="6" height="5"/><rect x="1011" y="539" width="6" height="5"/><rect x="1100" y="539" width="6" height="5"/><rect x="1188" y="539" width="6" height="5"/><rect x="1278" y="539" width="6" height="5"/><rect x="1367" y="539" width="6" height="5"/></g>

<use href="#fuji" x="396.500" y="546" width="66.500" height="45"/><rect x="396.500" y="546" width="66.500" height="45" fill="none" stroke="#ddd"/>

<svg x="486" y="547" width="65" height="43" viewBox="0 0 65 43"><rect width="65" height="43" fill="url(#t2)"/><ellipse cx="43" cy="12" rx="15" ry="3.500" fill="#e6d590"/><ellipse cx="43" cy="14" rx="10" ry="1.500" fill="#32405a"/><polygon points="0,43 10,36 24,30 36,23 42,22 50,27 58,32 65,35 65,43" fill="#2a3044"/></svg>
<svg x="575" y="547" width="66" height="43" viewBox="0 0 66 43"><rect width="66" height="43" fill="url(#t3)"/><polygon points="22,18 32,10 36,10 46,18" fill="#3c3f64"/><rect x="0" y="22" width="66" height="3" fill="#d0a060"/><path d="M5 30c12 2 24 0 36 3s16 8 25 5" stroke="#a87890" stroke-width="2.500" fill="none"/><path d="M10 36c8-3 16 0 22 5" stroke="#a8a0c0" stroke-width="2" fill="none"/></svg>
<svg x="664" y="543" width="66" height="50" viewBox="0 0 66 50"><rect width="66" height="50" fill="url(#t4)"/><circle cx="25" cy="8" r="6" fill="#d8e8ff"/><path d="M4 16c10-3 18 3 28 0s20-3 30 1v5c-10-2-16 2-24 0s-22 2-34-2z" fill="#dfe6f4"/><rect y="37" width="66" height="2" fill="#8088a0"/><ellipse cx="20" cy="38" rx="8" ry="2.500" fill="#eef"/></svg>
<svg x="753" y="543" width="65" height="50" viewBox="0 0 65 50"><rect width="65" height="50" fill="url(#t5)"/><circle cx="10" cy="10" r="1.500" fill="#eee"/><polygon points="4,37 20,30 34,14 40,14 52,28 64,36 40,40" fill="#5a3048"/><polygon points="30,18 35,14 40,14 46,20 38,22" fill="#e04848"/><polygon points="24,31 34,27 40,30 50,29 56,35 36,36" fill="#8c8498"/></svg>
<svg x="842" y="543" width="65.500" height="50" viewBox="0 0 66 50"><rect width="66" height="50" fill="url(#t6)"/><polygon points="14,16 30,10 36,10 56,17" fill="#3a3e5a"/><ellipse cx="30" cy="22" rx="32" ry="4" fill="#e8a040"/><ellipse cx="30" cy="30" rx="24" ry="4" fill="#f0d8a8"/><polygon points="40,50 50,36 66,30 66,50" fill="#1a2628"/><polygon points="0,36 12,42 20,50 0,50" fill="#2a3a3a"/></svg>
<svg x="931" y="543" width="65.500" height="50" viewBox="0 0 66 50"><rect width="66" height="50" fill="url(#t7)"/><circle cx="33" cy="15" r="3" fill="#e8d8a8"/><polygon points="0,40 12,30 20,22 32,17 44,20 54,30 66,36 66,50 0,50" fill="#26304a"/></svg>
<svg x="1029" y="538" width="47" height="61" viewBox="0 0 47 61"><rect width="47" height="61" fill="url(#t8)"/><ellipse cx="24" cy="31" rx="6" ry="3" fill="#2a4a90"/><path d="M6 46c6-4 10 2 16 0s12-4 20 2v8H6z" fill="#4a9a20"/></svg>
<svg x="1109" y="543" width="66" height="50" viewBox="0 0 66 50"><rect width="66" height="50" fill="#4a8c20"/><ellipse cx="30" cy="26" rx="24" ry="13" fill="#9ab8d8"/><polygon points="14,26 28,18 34,18 50,27" fill="#6878a8"/><ellipse cx="30" cy="32" rx="18" ry="3" fill="#ccd4e0"/><ellipse cx="10" cy="8" rx="14" ry="9" fill="#2e7a18"/><ellipse cx="50" cy="6" rx="20" ry="7" fill="#68b030"/><ellipse cx="14" cy="44" rx="16" ry="6" fill="#a0b830"/><ellipse cx="50" cy="44" rx="18" ry="7" fill="#5a9a28"/></svg>
<svg x="1208" y="538" width="46" height="61" viewBox="0 0 46 61"><rect width="46" height="61" fill="url(#t10)"/><path d="M20 0l8 30" stroke="#5e5860" stroke-width="7" opacity=".6"/><polygon points="6,42 22,36 26,36 42,42" fill="#382420"/></svg>
<svg x="1287" y="543" width="66" height="50" viewBox="0 0 66 50"><rect width="66" height="50" fill="url(#t11)"/><ellipse cx="20" cy="6" rx="24" ry="9" fill="#e05018"/><ellipse cx="50" cy="9" rx="22" ry="10" fill="#e43a10"/><ellipse cx="6" cy="22" rx="7" ry="13" fill="#d84010"/><ellipse cx="60" cy="20" rx="7" ry="8" fill="#e8a020"/><polygon points="20,35 34,28 38,28 54,35" fill="#4a6a9a"/></svg>
<svg x="1375.500" y="543" width="66" height="50" viewBox="0 0 66 50"><rect width="66" height="50" fill="url(#t12)"/><polygon points="2,44 14,30 26,16 33,13 40,16 50,26 64,40 64,50 2,50" fill="#7c7c7e"/><polygon points="2,44 18,38 32,42 48,38 64,42 64,50 2,50" fill="#2a2c32"/><circle cx="33" cy="13" r="1.500" fill="#fff"/></svg>
<g fill="none" stroke="#555"><rect x="486" y="547" width="65" height="43"/><rect x="575" y="547" width="66" height="43"/><rect x="664" y="543" width="66" height="50"/><rect x="753" y="543" width="65" height="50"/><rect x="842" y="543" width="65.500" height="50"/><rect x="931" y="543" width="65.500" height="50"/><rect x="1029" y="538" width="47" height="61"/><rect x="1109" y="543" width="66" height="50"/><rect x="1208" y="538" width="46" height="61"/><rect x="1287" y="543" width="66" height="50"/><rect x="1375.500" y="543" width="66" height="50"/></g>

<use href="#stars" x="431" y="605"/><use href="#stars" x="520" y="605"/><use href="#stars" x="609" y="605"/>
<use href="#star4" x="697" y="605"/><use href="#star4" x="786" y="605"/>
<use href="#stars" x="875" y="605"/><use href="#stars" x="964" y="605"/><use href="#stars" x="1054" y="605"/><use href="#stars" x="1143" y="605"/><use href="#stars" x="1232" y="605"/><use href="#stars" x="1321" y="605"/><use href="#stars" x="1409" y="605"/>
<text x="431" y="619" class="n" textLength="42" lengthAdjust="spacingAndGlyphs">DSC_3805.NEF</text>
<text x="520" y="619" class="n" textLength="42" lengthAdjust="spacingAndGlyphs">DSC_5792.NEF</text>
<text x="609" y="619" class="n" textLength="42" lengthAdjust="spacingAndGlyphs">DSC_7227.NEF</text>
<text x="697" y="619" class="n" textLength="50" lengthAdjust="spacingAndGlyphs">DSCF00...NR.NEF</text>
<text x="786" y="619" class="n" textLength="50" lengthAdjust="spacingAndGlyphs">DSCF80...R-2.NEF</text>
<text x="875" y="619" class="n" textLength="50" lengthAdjust="spacingAndGlyphs">DSCF04...NR.NEF</text>
<text x="964" y="619" class="n" textLength="43" lengthAdjust="spacingAndGlyphs">DSCF0765.NEF</text>
<text x="1054" y="619" class="n" textLength="50" lengthAdjust="spacingAndGlyphs">DSCF50...NR.NEF</text>
<text x="1143" y="619" class="n" textLength="43" lengthAdjust="spacingAndGlyphs">DSCF5627.NEF</text>
<text x="1232" y="619" class="n" textLength="43" lengthAdjust="spacingAndGlyphs">DSCF6410.NEF</text>
<text x="1321" y="619" class="n" textLength="50" lengthAdjust="spacingAndGlyphs">DSCF82...NR.NEF</text>
<text x="1409" y="619" class="n" textLength="43" lengthAdjust="spacingAndGlyphs">DSCF9049.NEF</text>
</g>

<!-- highlight frames and connectors -->
<g fill="none" stroke="#00a0e9" stroke-width="5.500">
<rect x="809.750" y="45.750" width="316.500" height="35.500"/>
<rect x="386.750" y="279.750" width="179.500" height="157.500"/>
<rect x="1290.750" y="89.750" width="192.500" height="35.500"/>
<rect x="1290.750" y="137.750" width="192.500" height="373.500"/>
<rect x="383.750" y="535.750" width="1070.500" height="88.500"/>
</g>
<g fill="#00a0e9">
<rect x="362" y="61.500" width="446" height="3.500"/>
<rect x="1486" y="105.500" width="23" height="3.500"/>
<rect x="1486" y="452.500" width="23" height="3.500"/>
<rect x="1065.500" y="627" width="3.500" height="20"/>
<rect x="495" y="440" width="3.500" height="40"/>
<rect x="175.500" y="476.500" width="323" height="3.500"/>
<rect x="175.500" y="476.500" width="3.500" height="172"/>
</g>

<!-- cards -->
<g stroke="#3a3035" stroke-width="1.600">
<rect x="41.800" y="41.800" width="319.500" height="299.500" rx="10" fill="#fff"/>
<path d="M41.800 103V51.800a10 10 0 0 1 10-10H351.300a10 10 0 0 1 10 10V103z" fill="#00a0e9"/>
<rect x="1509.800" y="79.800" width="318.500" height="302.500" rx="10" fill="#fff"/>
<path d="M1509.800 141V89.800a10 10 0 0 1 10-10H1818.300a10 10 0 0 1 10 10V141z" fill="#00a0e9"/>
<rect x="1509.800" y="423.800" width="318.500" height="298.500" rx="10" fill="#fff"/>
<path d="M1509.800 486V433.800a10 10 0 0 1 10-10H1818.300a10 10 0 0 1 10 10V486z" fill="#00a0e9"/>
<rect x="41.800" y="647.800" width="569.500" height="174.500" rx="10" fill="#fff"/>
<path d="M41.800 710V657.800a10 10 0 0 1 10-10H601.300a10 10 0 0 1 10 10V710z" fill="#00a0e9"/>
<rect x="695.800" y="647.800" width="743.500" height="174.500" rx="10" fill="#fff"/>
<path d="M695.800 710V657.800a10 10 0 0 1 10-10H1429.300a10 10 0 0 1 10 10V710z" fill="#00a0e9"/>
</g>

<text x="107" y="87" class="h" textLength="187" lengthAdjust="spacingAndGlyphs">コマンドバー</text>
<text x="1551" y="122" class="h" textLength="235" lengthAdjust="spacingAndGlyphs">補正ツールバー</text>
<text x="1527" y="467" class="h" textLength="285" lengthAdjust="spacingAndGlyphs">補正ツールパレット</text>
<text x="191" y="690" class="h" textLength="271" lengthAdjust="spacingAndGlyphs">プリセットエディタ</text>
<text x="967" y="690" class="h" textLength="200" lengthAdjust="spacingAndGlyphs">画像ブラウザ</text>

<text x="67" y="150.500" class="b" textLength="268" lengthAdjust="spacingAndGlyphs">「画像比較」「ズーム」</text>
<text x="67" y="192.500" class="b" textLength="274" lengthAdjust="spacingAndGlyphs">「トリミング」「水平」な</text>
<text x="63" y="232.500" class="g" textLength="276" lengthAdjust="spacingAndGlyphs">どの項目が並ぶ。補</text>
<text x="63" y="273.500" class="g" textLength="276" lengthAdjust="spacingAndGlyphs">正前と補正後を並べ</text>
<text x="63" y="315.500" class="b" textLength="166" lengthAdjust="spacingAndGlyphs">て表示できる</text>

<text x="1534.500" y="187.500" class="b" textLength="270" lengthAdjust="spacing">「ライト」「カラー」</text>
<text x="1534.500" y="228.500" class="b" textLength="274" lengthAdjust="spacingAndGlyphs">「ディテール」「ジオメ</text>
<text x="1530.500" y="270.500" class="b" textLength="277.500" lengthAdjust="spacingAndGlyphs">トリ」「部分調整」など</text>
<text x="1530.500" y="312.500" class="g" textLength="277.500" lengthAdjust="spacingAndGlyphs">補正の大分類を選べ</text>
<text x="1530.500" y="353.500" class="g">る</text>

<text x="1531" y="532" class="f" textLength="276" lengthAdjust="spacing">実際の補正機能が</text>
<text x="1531" y="573" class="f" textLength="276" lengthAdjust="spacing">並ぶ。上の補正ツー</text>
<text x="1531" y="614" class="f" textLength="276" lengthAdjust="spacing">ルバーで選んだ項目</text>
<text x="1531" y="656" class="f" textLength="276" lengthAdjust="spacing">に合わせて、内容が</text>
<text x="1531" y="697" class="f" textLength="114" lengthAdjust="spacing">変化する</text>

<text x="66" y="758.500" class="b" textLength="524" lengthAdjust="spacingAndGlyphs">「ポートレートと風景」「モノクロ」など被写</text>
<text x="64" y="798.500" class="g" textLength="518" lengthAdjust="spacingAndGlyphs">体ごとの補正プリセットが登録されている</text>
<text x="717" y="758.500" class="g" textLength="701" lengthAdjust="spacingAndGlyphs">画像を取り込むと画面下にサムネイルが並ぶ。写真に</text>
<text x="717" y="798.500" class="g" textLength="544" lengthAdjust="spacingAndGlyphs">レーティングやラベルを付けることも可能だ</text>
</svg>
</body></html>
